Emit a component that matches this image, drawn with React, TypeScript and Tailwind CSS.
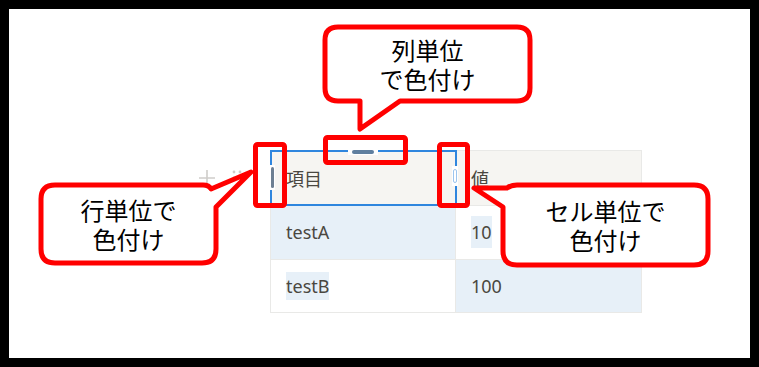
import { ReactNode } from 'react'

const jp = { fontFamily: '"Noto Sans CJK JP", "Noto Sans", sans-serif' }
const body = { fontFamily: '"Noto Sans", "Noto Sans CJK JP", sans-serif' }

function Callout({ className, children }: { className: string; children: ReactNode }) {
  return (
    <div
      className={`absolute flex flex-col items-center justify-center text-center text-[24px] leading-[29px] text-black ${className}`}
      style={jp}
    >
      {children}
    </div>
  )
}

export default function App() {
  return (
    <div className="relative w-[759px] h-[367px] bg-white border-[9px] border-black overflow-hidden">
      {/* table with row gutter */}
      <div className="flex pt-[141px] pl-[188px]">
        <div className="flex items-center w-[73px] h-[55px]">
          <svg width="20" height="20" viewBox="0 0 20 20" className="text-[#cfcdca]">
            <path d="M10 2v16M2 10h16" stroke="currentColor" strokeWidth="1.6" fill="none" />
          </svg>
          <svg width="14" height="18" viewBox="0 0 14 18" className="ml-[13px] text-[#cfcdca]">
            <circle cx="4" cy="3" r="1.4" fill="currentColor" />
            <circle cx="10" cy="3" r="1.4" fill="currentColor" />
            <circle cx="4" cy="9" r="1.4" fill="currentColor" />
            <circle cx="10" cy="9" r="1.4" fill="currentColor" />
            <circle cx="4" cy="15" r="1.4" fill="currentColor" />
            <circle cx="10" cy="15" r="1.4" fill="currentColor" />
          </svg>
        </div>

        <table className="border-collapse text-[18px] text-[#4a4740]" style={body}>
          <tbody>
            <tr className="h-[55px] bg-[#f6f5f2]">
              <td className="relative w-[185px] border border-[#e9e9e7] pl-[15px]" style={jp}>
                項目
                <div className="absolute -left-px -top-px w-[187px] h-[56px] border-2 border-[#2f86de]">
                  <div className="absolute left-[76px] -top-[3px] w-[30px] h-[6px] bg-white flex items-center justify-center">
                    <div className="w-[22px] h-[4px] rounded-full bg-[#5f7f9f]" />
                  </div>
                  <div className="absolute -left-[3px] top-[13px] w-[6px] h-[25px] bg-white flex items-center justify-center">
                    <div className="w-[3px] h-[21px] rounded-full bg-[#6d7f92]" />
                  </div>
                  <div className="absolute -right-[3px] top-[14px] w-[6px] h-[20px] bg-white flex items-center justify-center">
                    <div className="w-[4px] h-[14px] rounded-full border border-[#9cc5ee] bg-white" />
                  </div>
                </div>
              </td>
              <td className="w-[186px] border border-[#e9e9e7] pl-[15px]" style={jp}>
                値
              </td>
            </tr>
            <tr className="h-[54px]">
              <td className="border border-[#e9e9e7] bg-[#e7f0f8] pl-[15px]">testA</td>
              <td className="border border-[#e9e9e7] bg-white pl-[15px]">
                <span className="bg-[#e7f0f8] py-[4px]">10</span>
              </td>
            </tr>
            <tr className="h-[53px]">
              <td className="border border-[#e9e9e7] bg-white pl-[15px]">
                <span className="bg-[#e7f0f8] py-[2px]">testB</span>
              </td>
              <td className="border border-[#e9e9e7] bg-[#e7f0f8] pl-[15px]">100</td>
            </tr>
          </tbody>
        </table>
      </div>

      {/* annotations */}
      <svg
        className="absolute left-[-9px] top-[-9px]"
        width="759"
        height="367"
        viewBox="0 0 759 367"
        fill="white"
        stroke="#ff0000"
        strokeWidth="5"
        strokeLinejoin="round"
      >
        <rect x="325.5" y="137.5" width="80" height="25" rx="2" fill="none" />
        <rect x="255.5" y="144.5" width="29" height="61" rx="2" fill="none" />
        <rect x="439.5" y="144.5" width="28" height="61" rx="2" fill="none" />
        <path d="M338 27 H517 Q530 27 530 40 V88 Q530 101 517 101 H400 L360 129 V101 H338 Q325 101 325 88 V40 Q325 27 338 27 Z" />
        <path d="M55 185 H203 Q209 185 211 189 L251 172 L216 207 V249 Q216 263 202 263 H55 Q41 263 41 249 V199 Q41 185 55 185 Z" />
        <path d="M517 185 H694 Q708 185 708 199 V251 Q708 265 694 265 H517 Q503 265 503 251 V207 L474 188 L507 188 Q511 185 517 185 Z" />
      </svg>

      <Callout className="left-[316px] top-[18px] w-[205px] h-[74px]">
        <span>列単位</span>
        <span>で色付け</span>
      </Callout>
      <Callout className="left-[32px] top-[176px] w-[175px] h-[78px]">
        <span>行単位で</span>
        <span>色付け</span>
      </Callout>
      <Callout className="left-[494px] top-[176px] w-[205px] h-[80px]">
        <span>セル単位で</span>
        <span>色付け</span>
      </Callout>
    </div>
  )
}
